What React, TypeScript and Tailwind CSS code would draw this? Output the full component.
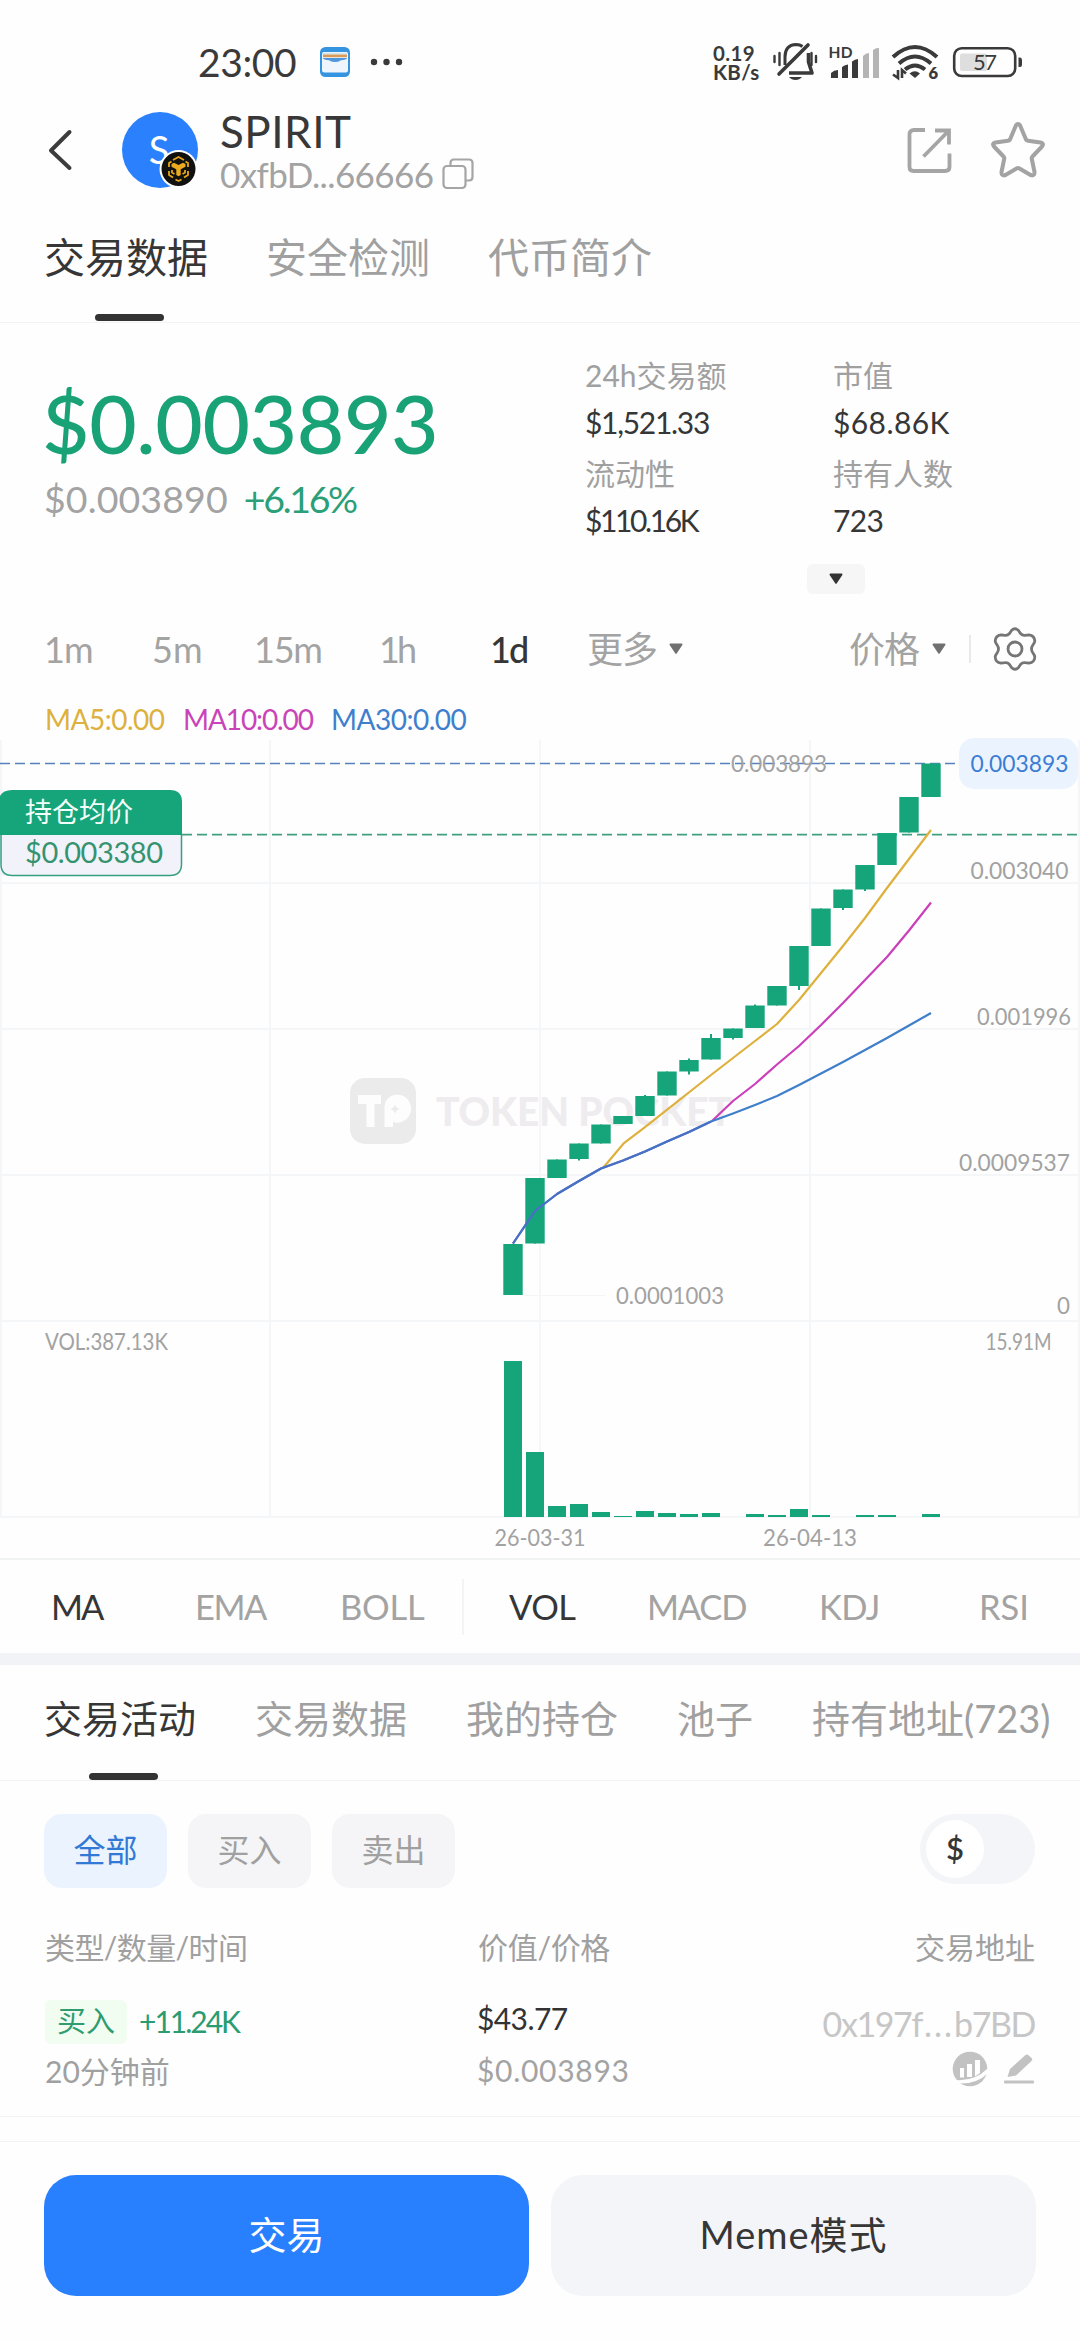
import React from "react";

type Candle = { top: number; bottom: number; high?: number; low?: number; vol: number };

const GREEN = "#16a57a";

const candles: Candle[] = [
  { top: 1244, bottom: 1295, vol: 156 },
  { top: 1178, bottom: 1243.5, vol: 65 },
  { top: 1159.5, bottom: 1178, vol: 11 },
  { top: 1143.5, bottom: 1159, low: 1160.5, vol: 13 },
  { top: 1124.5, bottom: 1143.5, vol: 5 },
  { top: 1116, bottom: 1124, vol: 1 },
  { top: 1096, bottom: 1116, high: 1095, vol: 6 },
  { top: 1071.5, bottom: 1095.5, vol: 4 },
  { top: 1060, bottom: 1071.5, high: 1058.5, low: 1074.5, vol: 3 },
  { top: 1038, bottom: 1059.5, high: 1034, vol: 4 },
  { top: 1028.5, bottom: 1038, low: 1039.5, vol: 0 },
  { top: 1005.5, bottom: 1028, high: 1004.5, vol: 3 },
  { top: 986, bottom: 1005.5, vol: 2 },
  { top: 946, bottom: 986, low: 990, vol: 8 },
  { top: 908.5, bottom: 946, vol: 2 },
  { top: 889.5, bottom: 908, low: 910, vol: 0 },
  { top: 865, bottom: 889.5, low: 891, vol: 2 },
  { top: 833, bottom: 865, vol: 2 },
  { top: 797, bottom: 832.5, vol: 0 },
  { top: 763.5, bottom: 797, vol: 3 },
];

const ma5 = "603,1168 624,1143 645,1127 711,1075 733,1058 755,1041 777,1024 799,1000 821,973 843,946 865,918 887,888 909,859 931,830";
const ma10 = "712,1121 733,1101 755,1084 777,1064.5 799,1046 821,1025 843,1003 865,980 887,957 909,930.5 931,902.5";
const ma30 = "513,1243.5 535,1211 557,1194 579,1181 601,1168.5 623,1160.5 645,1151.5 667,1141.5 689,1132 711,1121.5 733,1113.5 755,1105 777,1096 799,1085 821,1073.5 843,1062 865,1050 887,1038 909,1025.5 931,1013";
const ma30Early = "513,1243.5 535,1211 557,1194 579,1181 601,1168.5 623,1160.5 645,1151.5 667,1141.5 689,1132 711,1121.5";

function Label({ x, y, w, fill = "#a2a2a2", size = 22.5, children }: { x: number; y: number; w: number; fill?: string; size?: number; children: string }) {
  return (
    <text x={x} y={y + size * 0.36} textLength={w} lengthAdjust="spacingAndGlyphs" fontSize={size} fill={fill}>
      {children}
    </text>
  );
}

function Chart() {
  return (
    <svg className="block shrink-0" width="1080" height="822" viewBox="0 736 1080 822">
      <g stroke="#f5f6f7" strokeWidth="2">
        {[1, 270, 540, 810, 1079].map((x) => (
          <line key={x} x1={x} x2={x} y1="740" y2="1517" />
        ))}
        {[883, 1029, 1175, 1321, 1517].map((y) => (
          <line key={y} x1="0" x2="1080" y1={y} y2={y} />
        ))}
      </g>
      <g>
        <rect x="350" y="1078" width="66" height="66" rx="15" fill="#ebebeb" />
        <path d="M358 1095H381V1104H374.500V1127H366.500V1104H358Z" fill="#fdfdfd" />
        <path
          fillRule="evenodd"
          d="M394 1095A14 14 0 1 1 393 1122V1127H384.500V1107A12 12 0 0 1 394 1095ZM395 1104.500L396.500 1107.500L399.500 1109L396.500 1110.500L395 1113.500L393.500 1110.500L390.500 1109L393.500 1107.500Z"
          fill="#fdfdfd"
        />
        <text x="436" y="1125.500" textLength="296" fontSize="39" fontWeight="900" fill="#eeecee">
          TOKEN POCKET
        </text>
      </g>
      <line x1="0" x2="955" y1="763.500" y2="763.500" stroke="#5682bd" strokeWidth="1.700" strokeDasharray="10 5" />
      <line x1="182" x2="1080" y1="834.700" y2="834.700" stroke="#3f9f80" strokeWidth="1.700" strokeDasharray="10 5" />
      {candles.map((c, i) => {
        const x = 513 + i * 22;
        return (
          <g key={i} fill={GREEN}>
            <rect x={x - 9.7} y={c.top} width="19.4" height={c.bottom - c.top} />
            <rect x={x - 1} y={c.high ?? c.top} width="2" height={(c.low ?? c.bottom) - (c.high ?? c.top)} />
            {c.vol > 0 && <rect x={x - 9} y={1517 - c.vol} width="18" height={c.vol} />}
          </g>
        );
      })}
      <g fill="none" strokeWidth="2.200" strokeLinejoin="round">
        <polyline points={ma5} stroke="#deb03c" />
        <polyline points={ma10} stroke="#cb3fba" />
        <polyline points={ma30} stroke="#3f7fca" />
        <polyline points={ma30Early} stroke="#4a6fc4" />
      </g>
      <line x1="523" x2="605" y1="1295.500" y2="1295.500" stroke="#f4f5f5" />
      <Label x={731} y={764} w={96}>0.003893</Label>
      <rect x="959" y="738" width="119" height="51" rx="15" fill="#ebf4fe" />
      <Label x={970.5} y={764} w={98} fill="#3b7dd4">0.003893</Label>
      <Label x={970.5} y={871} w={98}>0.003040</Label>
      <Label x={977} y={1017} w={94}>0.001996</Label>
      <Label x={959} y={1162.5} w={111}>0.0009537</Label>
      <Label x={1057} y={1306} w={13}>0</Label>
      <Label x={616} y={1296} w={108}>0.0001003</Label>
      <Label x={45} y={1342} w={123}>VOL:387.13K</Label>
      <Label x={985.5} y={1342} w={66}>15.91M</Label>
      <Label x={494.5} y={1538} w={91}>26-03-31</Label>
      <Label x={763} y={1538} w={94}>26-04-13</Label>
      <rect x="-14" y="791" width="195.500" height="84.500" rx="12" fill="#f2f2fa" />
      <path d="M0 835V796Q3 790 12 790H170Q182 790 182 802V835Z" fill={GREEN} />
      <path d="M1 835V864Q1 875.500 12 875.500H170Q181.500 875.500 181.500 864V835" fill="none" stroke="#35a080" strokeWidth="1.500" />
      <text x="25" y="822" textLength="108" fontSize="27" fill="#f2fffa">持仓均价</text>
      <text x="25" y="863" textLength="138" fontSize="29" fill="#35946f">$0.003380</text>
    </svg>
  );
}

function Caret({ className }: { className: string }) {
  return (
    <svg width="16" height="12" viewBox="0 0 16 12" className={className}>
      <path d="M2.500 1.500H13.500L8 9.800Z" fill="currentColor" stroke="currentColor" strokeWidth="2" strokeLinejoin="round" />
    </svg>
  );
}

function StatusBar() {
  return (
    <div className="flex h-[92px] shrink-0 items-center pt-[32px] pl-[198px] text-[#3a3a3a]">
      <span className="w-[122px] text-[39px] leading-[60px] tracking-[-0.4px]">23:00</span>
      <svg width="30" height="30" viewBox="0 0 30 30">
        <rect width="30" height="30" rx="5.500" fill="#3594e0" />
        <path d="M2 6.500Q2 5 3.500 5H26.500Q28 5 28 6.500V23Q28 25.500 25.500 25.500H4.500Q2 25.500 2 23Z" fill="#eef5fc" />
        <rect x="3" y="6" width="24" height="1.600" fill="#cfe6e6" />
        <rect x="3" y="7.600" width="24" height="2.600" fill="#dc9a58" />
        <path d="M3 11H27Q26.500 13 21 13.200Q15 17 9 13.200Q3.500 13 3 11Z" fill="#4f97dc" />
      </svg>
      <svg className="ml-[20px]" width="34" height="8" viewBox="0 0 34 8" fill="currentColor">
        <circle cx="4" cy="4" r="3.200" />
        <circle cx="16.500" cy="4" r="3.200" />
        <circle cx="29" cy="4" r="3.200" />
      </svg>
      <div className="ml-[309px] flex w-[59px] flex-col pt-[2px] text-[20.5px] leading-[19px] font-bold">
        <span className="tracking-[0.4px]">0.19</span>
        <span className="tracking-[0.3px]">KB/s</span>
      </div>
      <svg width="46" height="40" viewBox="771 43 46 40" fill="none" stroke="currentColor" strokeWidth="3">
        <path d="M807 46L778 75" strokeWidth="3.600" strokeLinecap="round" />
        <path d="M784 66V58Q784 46 795 45.500Q799 45.500 801.500 47.500" />
        <path d="M807.500 54V63L811 74H788" strokeWidth="3.600" strokeLinejoin="round" />
        <path d="M788 78H801Q798.500 81 794.500 81Q790.500 81 788 78Z" fill="currentColor" stroke="none" />
        <path d="M773.500 57V63M778.500 54V66M810.500 54V66M815 57V63" strokeWidth="2.400" strokeLinecap="round" />
      </svg>
      <svg className="ml-[10px] overflow-visible" width="52" height="34" viewBox="827 45 52 34" fill="currentColor">
        <text x="827.500" y="58" fontSize="15.500" fontWeight="700" textLength="24">HD</text>
        <path d="M830 78V73Q833 70 837 70V78ZM841 78V67Q844 64.500 847 64.500V78ZM851 78V61.500Q854 59 857 59V78Z" />
        <path d="M862 78V56Q865 53 868 53V78ZM872 78V50Q875 47.500 878 48V78Z" fill="#b4b4b4" />
      </svg>
      <svg className="ml-[11px] overflow-visible" width="48" height="36" viewBox="890 45 48 36" fill="none" stroke="currentColor" strokeWidth="4">
        <path d="M892 58Q914 38 936 58" />
        <path d="M898 64.500Q914 50.500 930 64.500" />
        <path d="M904 70.500Q914 62.500 924 70.500" />
        <path d="M908.500 74.500Q914 70 919 74.500L914 79Z" fill="currentColor" stroke="none" />
        <path d="M897 71V79L892 75.500M901 79V71L905 74.500" strokeWidth="2.600" />
        <text x="927.500" y="80" fontSize="16.500" fontWeight="800" fill="currentColor" stroke="none">6</text>
      </svg>
      <svg className="ml-[13px] overflow-visible" width="72" height="32" viewBox="951 46 72 32">
        <rect x="953.200" y="48.200" width="61" height="27.800" rx="7.500" fill="none" stroke="currentColor" strokeWidth="2.600" />
        <rect x="959" y="53.500" width="27" height="17.500" rx="2" fill="#dedede" />
        <path d="M1017.500 57.500H1019Q1021 57.500 1021 60V64.500Q1021 67 1019 67H1017.500Z" fill="currentColor" />
        <text x="972" y="70" fontSize="22" textLength="24" fill="currentColor">57</text>
      </svg>
    </div>
  );
}

function Header() {
  return (
    <div className="flex h-[116px] shrink-0 items-center pl-[47px]">
      <svg width="28" height="44" viewBox="0 0 28 44" fill="none" stroke="#3c3c3c" strokeWidth="4" strokeLinecap="round" strokeLinejoin="round">
        <path d="M22.500 4L4 22.500L22.500 40" />
      </svg>
      <div className="relative ml-[47px] flex size-[76px] items-center justify-center rounded-full bg-[#2b80fe] text-[38px] leading-none text-white">
        <span className="relative -top-[1px] -left-[1px]">S</span>
        <svg className="absolute top-[38px] left-[37px]" width="40" height="40" viewBox="0 0 40 40">
          <circle cx="19.500" cy="19" r="19" fill="#fff" />
          <circle cx="19.500" cy="19" r="17" fill="#11120f" />
          <g fill="none" stroke="#e6a51e" strokeWidth="1.800" strokeLinejoin="round">
            <path d="M14 10L19.500 7L25 10M10 17V13L12.500 11.500M26.500 11.500L29 13V17M10 21V25L14 27.500M29 21V25L25 27.500M16.500 29.500L19.500 31L22.500 29.500" />
            <path d="M13 20V22.500L15.500 24M26 20V22.500L23.500 24" />
          </g>
          <path d="M12.500 14L15 12.700L19.500 15L24 12.700L26.500 14V16.700L21.700 19.300V25L19.500 26.300L17.300 25V19.300L12.500 16.700Z" fill="#eaa91f" />
        </svg>
      </div>
      <div className="ml-[22px] flex w-[687px] flex-col">
        <span className="text-[44px] leading-[48px] tracking-[0.5px] text-[#383838]">SPIRIT</span>
        <div className="flex h-[38px] items-center">
          <span className="w-[222px] text-[35px] leading-[38px] tracking-[-0.6px] text-[#a3a3a3]">0xfbD...66666</span>
          <svg width="32" height="32" viewBox="0 0 32 32" fill="none" stroke="#a5a5a5" strokeWidth="2.200">
            <rect x="1.500" y="8" width="22" height="22" rx="3.500" />
            <path d="M8.500 8V5Q8.500 1.500 12 1.500H27Q30.500 1.500 30.500 5V19Q30.500 22.500 27 22.500H24" />
          </svg>
        </div>
      </div>
      <svg className="-ml-[1px]" width="46" height="48" viewBox="0 0 46 48" fill="none" stroke="#a5a5a5" strokeWidth="3.800">
        <path d="M19 4H8Q3.500 4 3.500 8.500V41Q3.500 45 7.500 45H39Q43.500 45 43.500 41V27.500" />
        <path d="M29 4.500H43V18.500M42.500 5L17.500 30.500" />
      </svg>
      <svg className="ml-[38px]" width="56" height="58" viewBox="0 0 56 58" fill="none" stroke="#a3a3a3" strokeWidth="4" strokeLinejoin="round">
        <path d="M25.800 4.700Q28 1.500 30.200 4.700L36 18.500Q36.500 19.500 38 19.700L50.500 21.500Q54.500 22.500 52 25.500L42.500 35.500Q41.500 36.500 41.700 37.500L44.500 51Q44.700 55.500 40.500 54L29.500 47.500Q28 46.700 26.500 47.500L15.500 54Q11.300 55.500 11.500 51L14.300 37.500Q14.500 36.500 13.500 35.500L4 25.500Q1.500 22.500 5.500 21.500L18 19.700Q19.500 19.500 20 18.500Z" />
      </svg>
    </div>
  );
}

function TopTabs() {
  return (
    <div className="flex h-[115px] shrink-0 gap-[58px] border-b border-[#f3f3f3] pl-[44px] text-[41px] leading-[100px] text-[#a0a0a0]">
      <div className="flex flex-col items-center gap-[6px] text-[#363636]">
        <span className="h-[100px]">交易数据</span>
        <i className="mr-[-6px] h-[7px] w-[69px] rounded-full bg-[#333333]" />
      </div>
      <span>安全检测</span>
      <span>代币简介</span>
    </div>
  );
}

function Stat({ label, value, fit }: { label: string; value: string; fit: string }) {
  return (
    <div className="flex h-[98px] flex-col text-[30px]">
      <span className="h-[48px] leading-[48px] text-[#a0a0a0]">{label}</span>
      <span className={`h-[48px] leading-[47px] text-[#363636] ${fit}`}>{value}</span>
    </div>
  );
}

function PriceSection() {
  return (
    <div className="flex h-[286px] shrink-0 pl-[45px]">
      <div className="w-[540px] pt-[50px]">
        <div className="-ml-[3px] h-[101px] text-[82px] leading-[98px] font-medium tracking-[-0.4px] text-[#1aa277]">$0.003893</div>
        <div className="-ml-[1px] flex h-[50px] items-center gap-[16px] text-[37.5px] leading-[50px]">
          <span className="tracking-[0.1px] text-[#a3a3a3]">$0.003890</span>
          <span className="tracking-[-2.3px] text-[#2a9f78]">+6.16%</span>
        </div>
      </div>
      <div>
        <div className="grid h-[241px] grid-cols-[248px_230px] content-start pt-[28px]">
          <Stat label="24h交易额" value="$1,521.33" fit="tracking-[-1.3px]" />
          <Stat label="市值" value="$68.86K" fit="tracking-[0.4px]" />
          <Stat label="流动性" value="$110.16K" fit="tracking-[-2.4px]" />
          <Stat label="持有人数" value="723" fit="tracking-[-0.6px]" />
        </div>
        <div className="ml-[222px] flex h-[30px] w-[58px] items-center justify-center rounded-[6px] bg-[#f6f6f7]">
          <Caret className="text-[#333333]" />
        </div>
      </div>
    </div>
  );
}

function IntervalRow() {
  return (
    <div className="flex h-[80px] shrink-0 items-center pl-[44px] text-[36px] leading-[80px] text-[#a3a3a3]">
      <span className="w-[108px] tracking-[-0.8px]">1m</span>
      <span className="w-[102px]">5m</span>
      <span className="w-[125px] tracking-[-1.2px]">15m</span>
      <span className="w-[111px] tracking-[-3px]">1h</span>
      <span className="w-[97px] tracking-[-2px] font-medium text-[#363636]">1d</span>
      <span className="w-[81px] tracking-[-1px]">更多</span>
      <Caret className="text-[#707070]" />
      <span className="ml-[165px] w-[82px] tracking-[-1px]">价格</span>
      <Caret className="text-[#707070]" />
      <i className="ml-[22px] h-[28px] w-[2px] bg-[#e9e9e9]" />
      <svg className="ml-[21px]" width="46" height="46" viewBox="0 0 46 46" fill="none" stroke="#757575" strokeWidth="2.800" strokeLinejoin="round">
        <path d="M19.500 4.500Q23 1 26.500 4.500L28.500 7.500Q30.500 9.700 33 9.300L37 8.800Q42.500 9.500 42.800 15Q42.800 16.500 41 18.800Q39.500 21 39.500 23Q39.500 25 41 27.200Q42.800 29.500 42.800 31Q42.500 36.500 37 37.200L33 36.700Q30.500 36.300 28.500 38.500L26.500 41.500Q23 45 19.500 41.500L17.500 38.500Q15.500 36.300 13 36.700L9 37.200Q3.500 36.500 3.200 31Q3.200 29.500 5 27.200Q6.500 25 6.500 23Q6.500 21 5 18.800Q3.200 16.500 3.200 15Q3.500 9.500 9 8.800L13 9.300Q15.500 9.700 17.500 7.500Z" />
        <circle cx="23" cy="23" r="7" />
      </svg>
    </div>
  );
}

function IndicatorRow() {
  return (
    <div className="flex h-[95px] shrink-0 items-center border-t-2 border-[#f1f2f2] pl-[51px] text-[34.5px] leading-[93px] text-[#a3a3a3]">
      <span className="w-[144px] tracking-[-2px] text-[#363636]">MA</span>
      <span className="w-[145px] tracking-[-1.5px]">EMA</span>
      <span className="w-[122px] tracking-[-0.2px]">BOLL</span>
      <i className="h-[56px] w-[2px] bg-[#f4f4f4]" />
      <span className="ml-[45px] w-[138px] tracking-[-0.5px] text-[#363636]">VOL</span>
      <span className="w-[172px] tracking-[-1.2px]">MACD</span>
      <span className="w-[160px] tracking-[-0.5px]">KDJ</span>
      <span>RSI</span>
    </div>
  );
}

function ActivityTabs() {
  return (
    <div className="flex h-[116px] shrink-0 gap-[59px] border-b border-[#f2f2f2] pl-[44px] text-[38px] leading-[107px] whitespace-nowrap text-[#a0a0a0]">
      <div className="flex flex-col items-center text-[#363636]">
        <span className="h-[108px]">交易活动</span>
        <i className="mr-[-6px] h-[7px] w-[69px] rounded-full bg-[#333333]" />
      </div>
      <span>交易数据</span>
      <span>我的持仓</span>
      <span>池子</span>
      <span>持有地址(723)</span>
    </div>
  );
}

function Filters() {
  return (
    <div className="flex h-[140px] shrink-0 items-center gap-[21px] pr-[45px] pl-[44px] text-[32px]">
      <span className="flex h-[74px] w-[123px] items-center justify-center rounded-[18px] bg-[#ebf4fe] pb-[2px] text-[#3279d6]">全部</span>
      <span className="flex h-[74px] w-[123px] items-center justify-center rounded-[18px] bg-[#f5f5f7] pb-[2px] text-[#a0a0a0]">买入</span>
      <span className="flex h-[74px] w-[123px] items-center justify-center rounded-[18px] bg-[#f5f5f7] pb-[2px] text-[#a0a0a0]">卖出</span>
      <div className="mt-[-5px] ml-auto flex h-[70px] w-[115px] items-center rounded-full bg-[#f4f5f9] pl-[6px]">
        <span className="flex size-[58px] items-center justify-center rounded-full bg-white text-[31px] leading-none font-semibold text-[#363636]">$</span>
      </div>
    </div>
  );
}

function Trades() {
  return (
    <div className="flex shrink-0 flex-col pl-[45px] text-[30px]">
      <div className="flex h-[54px] items-center pr-[45px] pb-[2px] text-[#a0a0a0]">
        <span className="w-[433px] tracking-[-0.6px]">类型/数量/时间</span>
        <span className="tracking-[-0.3px]">价值/价格</span>
        <span className="ml-auto">交易地址</span>
      </div>
      <div className="-ml-[45px] flex h-[142px] border-b border-[#f2f2f2] pr-[45px] pl-[45px]">
        <div className="flex w-[432px] flex-col pt-[24px]">
          <div className="flex h-[46px] items-center gap-[12px]">
            <span className="flex h-[44px] w-[82px] items-center justify-center rounded-[6px] bg-[#f1fdf0] pb-[2px] text-[29px] text-[#2f9b70]">买入</span>
            <span className="pb-[1px] leading-[45px] tracking-[-2px] text-[#2b9c72]">+11.24K</span>
          </div>
          <span className="leading-[52px] text-[#a0a0a0]">20分钟前</span>
        </div>
        <div className="flex flex-col pt-[20px]">
          <span className="h-[50px] leading-[47px] tracking-[-0.6px] text-[#333333]">$43.77</span>
          <span className="leading-[50px] tracking-[0.7px] text-[#a3a3a3]">$0.003893</span>
        </div>
        <div className="ml-auto flex flex-col items-end pt-[24px]">
          <span className="h-[50px] text-[34px] leading-[49px] tracking-[-1.4px] text-[#c6c6c6]">
            0x197f<span className="pl-[2px] tracking-[2px]">...</span>b7BD
          </span>
          <div className="flex gap-[15px] pt-[2px]">
            <svg width="36" height="36" viewBox="0 0 36 36">
              <circle cx="18" cy="18" r="17.300" fill="#c2c2c2" />
              <path d="M8 17H12V26.500H8ZM15 13H20V26H15ZM23 9H28V22L23 25.500Z" fill="#fff" />
              <path d="M3.500 29Q23 30.500 35.500 17.500V22.500Q26 32.500 8 32.500Z" fill="#fff" />
            </svg>
            <svg width="32" height="36" viewBox="0 0 32 36" fill="#c2c2c2">
              <path d="M4.500 26L7 18L22.500 4Q24 2.800 25.500 4.300L28.500 7Q30 8.500 28.500 10L13 24.500Z" />
              <rect x="1" y="29.500" width="30" height="3" rx="1" />
            </svg>
          </div>
        </div>
      </div>
    </div>
  );
}

export default function App() {
  return (
    <main className="flex h-[2340px] w-[1080px] flex-col overflow-hidden bg-[#fefefe] font-[Lato,'Noto_Sans_CJK_SC',sans-serif]">
      <StatusBar />
      <Header />
      <TopTabs />
      <PriceSection />
      <IntervalRow />
      <div className="flex h-[47px] shrink-0 pt-[10px] pl-[45px] text-[28px] leading-[40px] whitespace-nowrap">
        <span className="w-[138px] tracking-[-0.5px] text-[#dcb13e]">MA5:0.00</span>
        <span className="w-[148px] tracking-[-1.1px] text-[#c944b8]">MA10:0.00</span>
        <span className="tracking-[-0.5px] text-[#3f7fcd]">MA30:0.00</span>
      </div>
      <Chart />
      <IndicatorRow />
      <div className="h-[12px] shrink-0 bg-[#f2f3f6]" />
      <ActivityTabs />
      <Filters />
      <Trades />
      <div className="mt-[24px] flex gap-[22px] border-t border-[#f2f2f2] px-[44px] pt-[33px] text-[38px]">
        <button className="h-[121px] w-[485px] rounded-[32px] bg-[#2880ff] pb-[2px] text-white">交易</button>
        <button className="h-[121px] w-[485px] rounded-[32px] bg-[#f4f5f9] pb-[2px] tracking-[1px] text-[#363636]">Meme模式</button>
      </div>
    </main>
  );
}
